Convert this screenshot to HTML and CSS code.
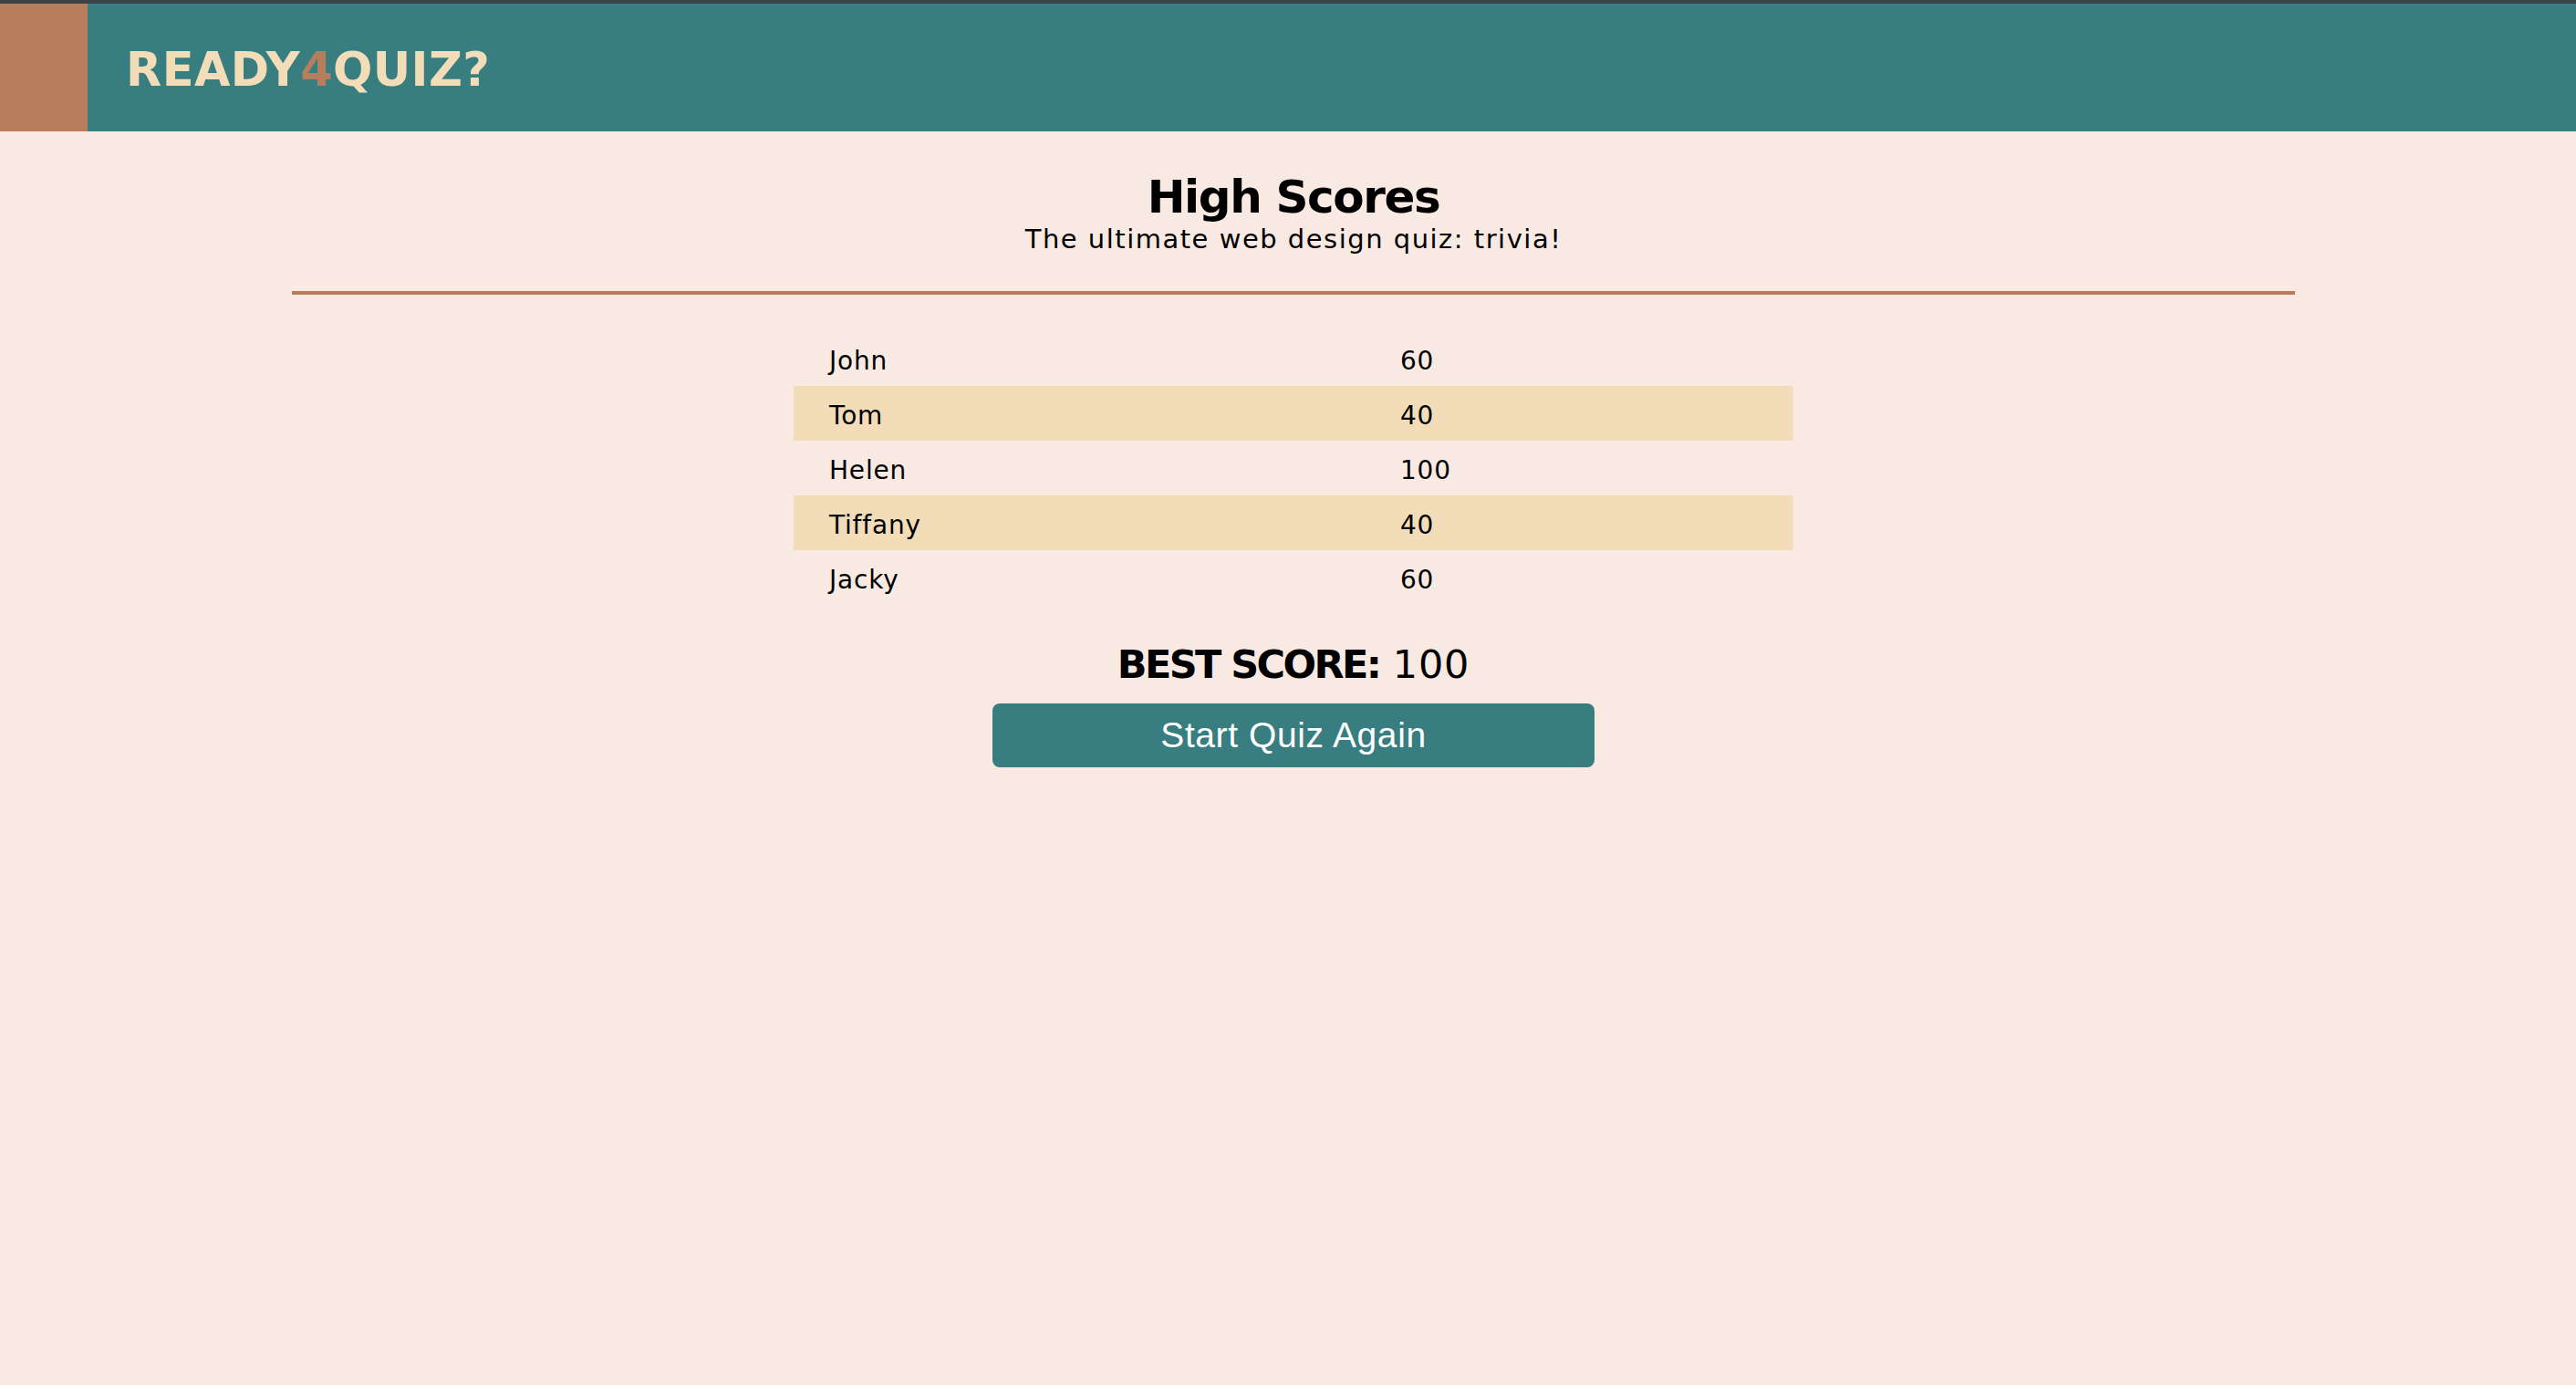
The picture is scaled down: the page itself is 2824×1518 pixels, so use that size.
FILE: index.html
```html
<!DOCTYPE html>
<html>
<head>
<meta charset="utf-8">
<title>Ready4Quiz - High Scores</title>
<link rel="stylesheet" href="styles.css">
</head>
<body>
<div class="topbar"></div>
<header class="header">
  <div class="header-accent"></div>
  <div class="logo">READY<span class="logo-four">4</span>QUIZ?</div>
</header>
<main class="main">
  <h1 class="title">High Scores</h1>
  <p class="subtitle">The ultimate web design quiz: trivia!</p>
  <hr class="divider">
  <table class="scores">
    <tr><td class="name">John</td><td class="score">60</td></tr>
    <tr class="alt"><td class="name">Tom</td><td class="score">40</td></tr>
    <tr><td class="name">Helen</td><td class="score">100</td></tr>
    <tr class="alt"><td class="name">Tiffany</td><td class="score">40</td></tr>
    <tr><td class="name">Jacky</td><td class="score">60</td></tr>
  </table>
  <div class="best"><strong class="best-label">BEST SCORE:</strong> 100</div>
  <button class="again">Start Quiz Again</button>
</main>
</body>
</html>
```

FILE: styles.css
```css
html, body {
  margin: 0;
  padding: 0;
}
body {
  background: #f8eae2;
  font-family: "DejaVu Sans", Verdana, sans-serif;
  color: #000;
  min-height: 1518px;
}
.topbar {
  height: 4px;
  background: #3d4246;
}
.header {
  display: flex;
  align-items: center;
  height: 140px;
  background: #387e80;
}
.header-accent {
  width: 96px;
  align-self: stretch;
  background: #b77e5d;
}
.logo {
  margin-left: 42px;
  font-size: 51px;
  font-weight: bold;
  color: #f3ddb9;
  line-height: 1;
  margin-top: 4px;
  letter-spacing: 0.4px;
}
.logo-four {
  color: #b77e5d;
}
.main {
  display: flex;
  flex-direction: column;
  align-items: center;
  padding-left: 12px;
}
.title {
  margin: 47px 0 0;
  font-size: 50px;
  line-height: 50px;
  font-weight: bold;
  letter-spacing: -1.4px;
}
.subtitle {
  margin: 7px 0 0;
  font-size: 29px;
  line-height: 29px;
  letter-spacing: 1.5px;
}
.divider {
  width: 2196px;
  height: 4px;
  margin: 42px 0 0;
  border: 0;
  background: #b77e5d;
}
.scores {
  margin-top: 40px;
  width: 1096px;
  border-collapse: collapse;
  font-size: 28px;
  letter-spacing: 0.8px;
}
.scores tr {
  height: 60px;
}
.scores td {
  padding: 6px 0 0 39px;
  height: 56px;
  line-height: 54px;
  box-sizing: border-box;
}
.scores .name {
  width: 626px;
}
.scores .alt {
  background: #f3ddb9;
}
.best {
  margin-top: 44px;
  font-size: 43px;
  line-height: 43px;
  letter-spacing: 0.8px;
}
.best-label {
  letter-spacing: -2.6px;
}
.again {
  margin-top: 21px;
  width: 660px;
  height: 70px;
  border: 0;
  border-radius: 8px;
  background: #387e80;
  color: #fff;
  font-family: "Liberation Sans", Arial, sans-serif;
  font-size: 39px;
  line-height: 70px;
  letter-spacing: 0.6px;
  padding: 0 0 4px;
}
```
